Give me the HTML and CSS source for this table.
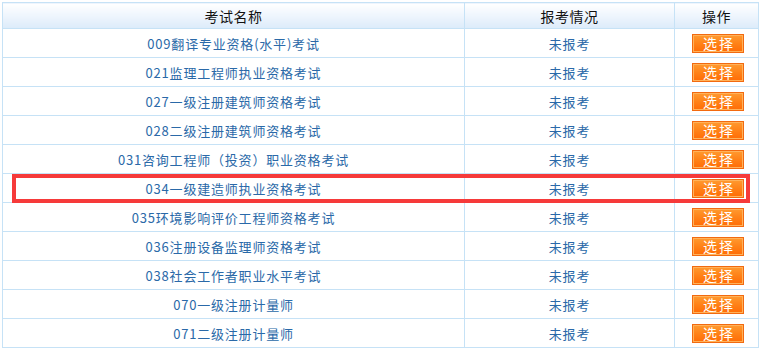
FILE: index.html
```html
<!DOCTYPE html>
<html>
<head>
<meta charset="utf-8">
<link rel="stylesheet" href="styles.css">
</head>
<body>
<div class="wrap">
<table class="exam">
  <thead>
    <tr><th class="c-name">考试名称</th><th class="c-status">报考情况</th><th class="c-op">操作</th></tr>
  </thead>
  <tbody>
    <tr><td class="name">009翻译专业资格(水平)考试</td><td class="status">未报考</td><td class="op"><span class="btn">选择</span></td></tr>
    <tr><td class="name">021监理工程师执业资格考试</td><td class="status">未报考</td><td class="op"><span class="btn">选择</span></td></tr>
    <tr><td class="name">027一级注册建筑师资格考试</td><td class="status">未报考</td><td class="op"><span class="btn">选择</span></td></tr>
    <tr><td class="name">028二级注册建筑师资格考试</td><td class="status">未报考</td><td class="op"><span class="btn">选择</span></td></tr>
    <tr><td class="name">031咨询工程师（投资）职业资格考试</td><td class="status">未报考</td><td class="op"><span class="btn">选择</span></td></tr>
    <tr><td class="name">034一级建造师执业资格考试</td><td class="status">未报考</td><td class="op"><span class="btn">选择</span></td></tr>
    <tr><td class="name">035环境影响评价工程师资格考试</td><td class="status">未报考</td><td class="op"><span class="btn">选择</span></td></tr>
    <tr><td class="name">036注册设备监理师资格考试</td><td class="status">未报考</td><td class="op"><span class="btn">选择</span></td></tr>
    <tr><td class="name">038社会工作者职业水平考试</td><td class="status">未报考</td><td class="op"><span class="btn">选择</span></td></tr>
    <tr><td class="name">070一级注册计量师</td><td class="status">未报考</td><td class="op"><span class="btn">选择</span></td></tr>
    <tr><td class="name">071二级注册计量师</td><td class="status">未报考</td><td class="op"><span class="btn">选择</span></td></tr>
  </tbody>
</table>
<div class="highlight"></div>
</div>
</body>
</html>
```
FILE: styles.css
```css
html, body {
  margin: 0;
  padding: 0;
  background: #ffffff;
}
body {
  padding: 2px;
  font-family: "Noto Sans CJK SC", "DejaVu Sans", sans-serif;
}
.wrap {
  position: relative;
  width: 757px;
}
.exam {
  width: 757px;
  border-collapse: collapse;
  table-layout: fixed;
}
.exam th, .exam td {
  border: 1px solid #c6e2f6;
  padding: 0;
  text-align: center;
  vertical-align: middle;
}
.exam th {
  height: 25px;
  font-weight: normal;
  font-size: 14px;
  letter-spacing: 0.5px;
  color: #111111;
  background: linear-gradient(to bottom, #ffffff 0%, #eef5fd 50%, #dcebfa 100%);
}
.c-name { width: 461px; }
.c-status { width: 209px; }
.c-op { width: 83px; }
.exam td {
  height: 28px;
  font-size: 13px;
  letter-spacing: 0.8px;
  color: #2a69a8;
}
.exam td.op {
  padding-left: 3px;
}
.btn {
  display: inline-block;
  box-sizing: border-box;
  width: 52px;
  height: 19px;
  line-height: 16px;
  font-size: 14px;
  color: #ffffff;
  letter-spacing: 2px;
  text-indent: 2px;
  border: 1px solid #f26a10;
  box-shadow: inset 0 0 0 1px #ffb25a;
  background: linear-gradient(to bottom, #ff9a30 0%, #ff8218 50%, #ff6c06 100%);
  vertical-align: middle;
}
.highlight {
  position: absolute;
  left: 10px;
  top: 172px;
  width: 730px;
  height: 21px;
  border: 4px solid #f63a3a;
}
```
